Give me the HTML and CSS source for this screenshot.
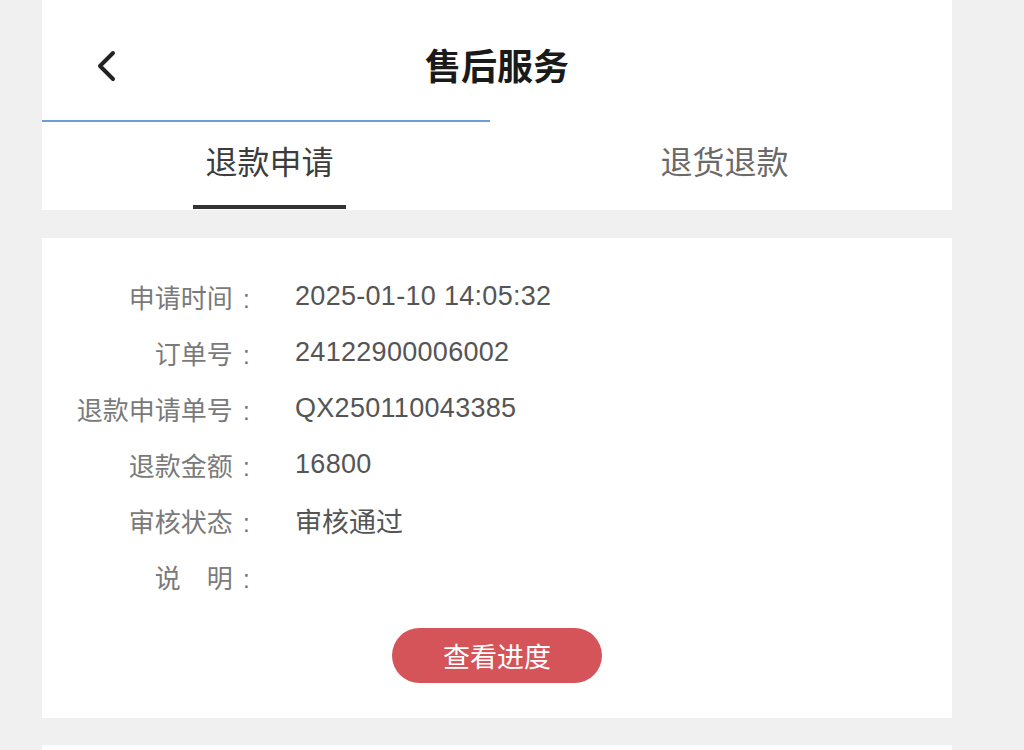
FILE: index.html
```html
<!DOCTYPE html>
<html lang="zh-CN">
<head>
    <meta charset="UTF-8">
    <meta name="viewport" content="width=device-width, initial-scale=1.0">
    <title>售后服务</title>
    <link rel="stylesheet" href="styles.css">
</head>
<body>
    <div class="page">
        <div class="header">
            <div class="nav">
                <span class="back">
                    <svg width="24" height="34" viewBox="0 0 24 34">
                        <path d="M19 4 L6 17 L19 30" fill="none" stroke="#222" stroke-width="4" stroke-linecap="round" stroke-linejoin="round"/>
                    </svg>
                </span>
                <h1 class="title">售后服务</h1>
                <span></span>
            </div>
            <div class="nav-line"></div>
            <div class="tabs">
                <div class="tab active"><span>退款申请</span></div>
                <div class="tab"><span>退货退款</span></div>
            </div>
        </div>

        <div class="card">
            <div class="info-row">
                <span class="label">申请时间</span>
                <span class="value">2025-01-10 14:05:32</span>
            </div>
            <div class="info-row">
                <span class="label">订单号</span>
                <span class="value">24122900006002</span>
            </div>
            <div class="info-row">
                <span class="label">退款申请单号</span>
                <span class="value">QX250110043385</span>
            </div>
            <div class="info-row">
                <span class="label">退款金额</span>
                <span class="value">16800</span>
            </div>
            <div class="info-row">
                <span class="label">审核状态</span>
                <span class="value cjk">审核通过</span>
            </div>
            <div class="info-row">
                <span class="label">说&emsp;明</span>
                <span class="value"></span>
            </div>
            <div class="actions">
                <button class="btn-progress">查看进度</button>
            </div>
        </div>

        <div class="card-next"></div>
    </div>
</body>
</html>
```

FILE: styles.css
```css
body {
    margin: 0;
    background-color: #f0f0f0;
    font-family: "Liberation Sans", "Noto Sans CJK SC", sans-serif;
}
.page {
    width: 910px;
    margin-left: 42px;
}
.header {
    background: white;
}
.nav {
    height: 120px;
    display: grid;
    grid-template-columns: 1fr auto 1fr;
    align-items: center;
}
.back {
    padding-left: 52px;
    padding-top: 12px;
    display: flex;
}
.title {
    margin: 0;
    padding-top: 8px;
    font-family: "Noto Sans CJK SC", sans-serif;
    font-size: 36px;
    font-weight: 700;
    color: #1a1a1a;
}
.nav-line {
    width: 448px;
    height: 2px;
    background-color: #6c9fd6;
}
.tabs {
    display: flex;
    height: 88px;
}
.tab {
    flex: 1;
    display: flex;
    justify-content: center;
    align-items: flex-end;
}
.tab span {
    font-family: "Noto Sans CJK SC", sans-serif;
    font-size: 32px;
    color: #6a6a6a;
    padding: 0 12px 25px;
    line-height: 40px;
    border-bottom: 4px solid transparent;
    margin-bottom: 1px;
}
.tab.active span {
    color: #3c3c3c;
    border-bottom-color: #333;
}
.card {
    background: white;
    margin-top: 28px;
    padding: 30px 0 35px;
}
.info-row {
    display: grid;
    grid-template-columns: 208px 1fr;
    column-gap: 45px;
    height: 56px;
    align-items: center;
}
.label {
    text-align: right;
    font-family: "Noto Sans CJK SC", sans-serif;
    font-size: 26px;
    color: #7a7a7a;
}
.label::after {
    content: ":";
    font-family: "Liberation Sans", sans-serif;
    margin-left: 10px;
}
.value {
    font-size: 27px;
    color: #555;
    letter-spacing: 0.3px;
}
.value.cjk {
    font-family: "Noto Sans CJK SC", sans-serif;
    font-size: 27px;
    letter-spacing: 0;
}
.actions {
    display: flex;
    justify-content: center;
    margin-top: 24px;
}
.btn-progress {
    width: 210px;
    height: 55px;
    border: none;
    border-radius: 28px;
    background-color: #d4545a;
    color: white;
    font-family: "Noto Sans CJK SC", sans-serif;
    font-size: 27px;
}
.card-next {
    background: white;
    margin-top: 27px;
    height: 40px;
}
```
